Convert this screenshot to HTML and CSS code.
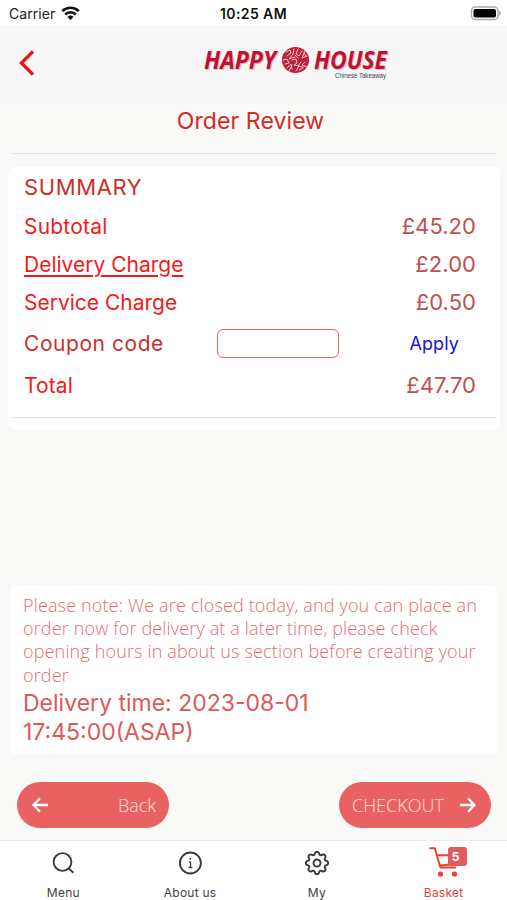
FILE: index.html
```html
<!DOCTYPE html>
<html lang="en">
<head>
<meta charset="utf-8">
<meta name="viewport" content="width=device-width, initial-scale=1">
<title>Order Review</title>
<link rel="stylesheet" href="styles.css">
</head>
<body>
<div class="screen">
  <div class="status">
    <div class="carrier"><span>Carrier</span>
      <svg width="19" height="15" viewBox="0 0 19 15" fill="none" stroke="#111" stroke-width="2.5"><path d="M1.2 5.2a11.8 11.8 0 0 1 16.6 0M4.2 8.5a7.5 7.5 0 0 1 10.6 0"/><path d="M9.5 14 6.5 10.9a4.3 4.3 0 0 1 6 0z" fill="#111" stroke="none"/></svg>
    </div>
    <strong class="clock">10:25 AM</strong>
    <svg class="battery" width="32" height="15" viewBox="0 0 32 15"><rect x="1.5" y="1" width="26.5" height="12.5" rx="3.8" fill="#fff" stroke="#aaa" stroke-width="1.4"/><rect x="3.5" y="3" width="22.5" height="8.6" rx="1.8"/><path d="M29.5 5q2 2.2 0 4.4z" fill="#aaa" stroke="#aaa"/></svg>
  </div>
  <header class="header">
    <svg class="chevron" width="18" height="28" viewBox="0 0 18 28" fill="none" stroke="#f11212" stroke-width="3.2"><path d="M16 2.5 4.4 14 16 25.5"/></svg>
    <svg class="logo" width="190" height="42" viewBox="0 0 190 42">
      <g class="wordmark"><text x="1" y="29.5" textLength="72" lengthAdjust="spacingAndGlyphs">HAPPY</text><text x="111" y="29.5" textLength="73" lengthAdjust="spacingAndGlyphs">HOUSE</text></g>
      <ellipse cx="92.5" cy="21" rx="13.6" ry="13" fill="#c11e38"/>
      <g transform="translate(0 -1)" fill="none" stroke="#f3d3d6" stroke-width=".95" stroke-linecap="round"><path d="m83 14 4-2 1 3-4 3m7-7-1 5-4 5 6-2m3-8-2 5 3 2 3-5m3 0-3 7 5-2M80 22l4-1 2 4-4 1m2 4 4-4 1 5m0-9 4-1 1 4-3 2 5 1-3 5m5-9-3 4 5 1m2-5-3 3 5 2M95 20l-3-3m8 13-4 2m-7-5-3 6M101 15l2 3"/></g>
      <text class="tagline" x="132" y="39" textLength="51" lengthAdjust="spacingAndGlyphs">Chinese Takeaway</text>
    </svg>
  </header>
  <main class="main">
    <h1 class="title">Order Review</h1>
    <section class="card">
      <h2 class="row summary">SUMMARY</h2>
      <div class="row subtotal"><span>Subtotal</span><span class="price">£45.20</span></div>
      <div class="row delivery"><a>Delivery Charge</a><span class="price">£2.00</span></div>
      <div class="row service"><span>Service Charge</span><span class="price">£0.50</span></div>
      <div class="row coupon"><label for="code">Coupon code</label><input id="code" type="text"><button class="apply">Apply</button></div>
      <div class="row total"><span>Total</span><span class="price">£47.70</span></div>
    </section>
    <section class="notice">
      <p class="note">Please note: We are closed today, and you can place an order now for delivery at a later time, please check opening hours in about us section before creating your order</p>
      <p class="time">Delivery time: 2023-08-01<br>17:45:00(ASAP)</p>
    </section>
    <div class="actions">
      <button class="pill"><svg width="17" height="16" viewBox="0 0 17 16"><path d="M16 8H1.5M8 1.2 1.5 8 8 14.8"/></svg><span>Back</span></button>
      <button class="pill next"><span>CHECKOUT</span><svg width="17" height="16" viewBox="0 0 17 16"><path d="M1 8h14.5M9 1.2 15.5 8 9 14.8"/></svg></button>
    </div>
  </main>
  <nav class="tabs">
    <a class="tab"><svg width="26" height="26" viewBox="-13 -13 26 26"><circle cx="-.5" cy="-1" r="8.9"/><path d="m5.8 5.4 4.6 4.3"/></svg><span>Menu</span></a>
    <a class="tab"><svg width="26" height="26" viewBox="-13 -13 26 26"><circle cx=".4" r="10.5"/><path class="thin" d="M-1.1-1.1H.5v5.5M-1.4 4.5h3.8"/><circle cx=".4" cy="-4.3" r="1" class="dot"/></svg><span>About us</span></a>
    <a class="tab"><svg width="26" height="26" viewBox="-13 -13 26 26"><circle r="3.5"/><path d="M-2.6-8.2Q-1.8-11.2 0-11.2T2.6-8.2L3.96-7.64Q6.5-9.3 7.9-7.9T7.64-3.96L8.2-2.6Q11.2-1.8 11.2 0T8.2 2.6L7.64 3.96Q9.3 6.5 7.9 7.9T3.96 7.64L2.6 8.2Q1.8 11.2 0 11.2T-2.6 8.2L-3.96 7.64Q-6.5 9.3-7.9 7.9T-7.64 3.96L-8.2 2.6Q-11.2 1.8-11.2 0T-8.2-2.6L-7.64-3.96Q-9.3-6.5-7.9-7.9T-3.96-7.64z"/></svg><span>My</span></a>
    <a class="tab active"><span class="cart"><svg width="32" height="32" viewBox="0 0 32 32"><path d="M1.5 3.2h5.3l5.6 19.3h15.8M9.2 10.2h20l-3.2 9-14.2 1.3"/><circle cx="12.5" cy="29" r="2.6" class="dot"/><circle cx="26.5" cy="29" r="2.6" class="dot"/></svg><b class="badge">5</b></span><span>Basket</span></a>
  </nav>
</div>
</body>
</html>
```
FILE: styles.css
```css
* { box-sizing: border-box; }
body { margin: 0; background: #f9f9f7; font-family: Inter, sans-serif; color: #f11b1b; }
h1, h2, p { margin: 0; font-weight: 400; }
button { border: 0; background: none; padding: 0; font: inherit; }
svg { display: block; flex: none; }
.screen { width: 507px; height: 900px; display: flex; flex-direction: column; overflow: hidden; }
.status { height: 26px; flex: none; background: #fff; display: grid; grid-template-columns: 1fr auto 1fr; align-items: center; padding: 1px 5px 0 9px; color: #222; }
.carrier { display: flex; align-items: center; gap: 6px; font-size: 14px; letter-spacing: .05px; }
.clock { font-size: 14px; font-weight: 600; color: #111; letter-spacing: .4px; margin-right: 4px; }
.battery { justify-self: end; }
.header { height: 71px; flex: none; background: #f7f7f7; display: flex; align-items: flex-start; padding: 10px 0 0 17px; }
.chevron { margin-top: 13px; }
.logo { margin: 3px 0 0 168px; overflow: visible; }
.wordmark { font-family: "Open Sans", sans-serif; font-style: italic; font-weight: 700; font-size: 25.5px; fill: #bf1230; text-shadow: 1.5px 1.2px 0 #efb9bd; }
.tagline { font-family: "Liberation Sans", sans-serif; font-size: 6.5px; fill: #444; }
.main { flex: 1; display: flex; flex-direction: column; }
.title { height: 57px; margin: 0 11px 13px 12px; border-bottom: 1px solid #dfe2e1; text-align: center; font-size: 23px; line-height: 49px; color: #d52b25; letter-spacing: .1px; padding-right: 7px; }
.card { margin: 0 7px 0 8px; height: 263px; background: #fff; border-radius: 7px; display: flex; flex-direction: column; }
.row { display: flex; align-items: center; justify-content: space-between; padding: 0 24px 0 16px; font-size: 21px; letter-spacing: .2px; height: 38px; }
.summary { height: 40px; color: #c9302b; font-size: 22px; letter-spacing: .6px; }
.delivery, .service { letter-spacing: 0; }
.delivery a { text-decoration: underline; text-decoration-thickness: 1.5px; text-underline-offset: 3px; }
.price { color: #c05050; font-size: 22px; letter-spacing: .05px; }
.coupon { height: 45px; color: #c9302b; display: grid; grid-template-columns: 193px 122px 1fr; letter-spacing: .55px; }
.coupon input { width: 122px; height: 29px; border: 1.5px solid #dc6c63; border-radius: 6px; background: #fff; }
.apply { color: #1712dc; font-size: 18px; letter-spacing: .1px; justify-self: end; margin-right: 17px; }
.total { margin: 0 4px; padding: 0 20px 13px 12px; height: 52px; border-bottom: 1px solid #dedfe0; letter-spacing: .1px; }
.notice { margin: 155px 10px 0; height: 169px; background: #fff; border-radius: 6px; padding: 9px 13px 0; }
.note { font-family: "Open Sans", sans-serif; font-weight: 300; font-size: 18px; line-height: 23.2px; color: #e66c73; letter-spacing: .15px; }
.time { font-size: 23px; line-height: 29px; color: #dc5959; margin-top: 2px; }
.actions { margin: 28px 16px 0 17px; display: flex; justify-content: space-between; }
.pill { width: 152px; height: 46px; border-radius: 23px; background: #e96262; display: flex; align-items: center; justify-content: space-between; padding: 0 13px 0 15px; font-family: "Open Sans", sans-serif; font-weight: 300; font-size: 18px; color: #ffe0de; }
.pill svg { fill: none; stroke: #fff; stroke-width: 2.3; }
.next { padding: 0 15px 0 13px; }
.tabs { height: 60px; flex: none; background: #fff; border-top: 1px solid #ececec; display: grid; grid-template-columns: repeat(4, 1fr); }
.tab { height: 59px; display: flex; flex-direction: column; align-items: center; justify-content: space-between; padding: 9px 0 0; font-size: 12px; line-height: 15px; color: #424242; letter-spacing: .25px; }
.tab svg { fill: none; stroke: #3b3b3b; stroke-width: 1.9; stroke-linejoin: round; }
.tab .thin { stroke-width: 1.3; }
.tab .dot { fill: #3b3b3b; stroke: none; }
.tab.active { padding-top: 4px; color: #e84238; }
.tab.active svg { stroke: #ec3e31; }
.tab.active .dot { fill: #ec3e31; }
.cart { position: relative; width: 32px; height: 32px; }
.badge { position: absolute; left: 20px; top: 2px; width: 19px; height: 19px; border-radius: 3px; background: #df5b60; color: #fff; font-size: 12px; line-height: 20px; padding-right: 3px; text-align: center; letter-spacing: 0; }
```
